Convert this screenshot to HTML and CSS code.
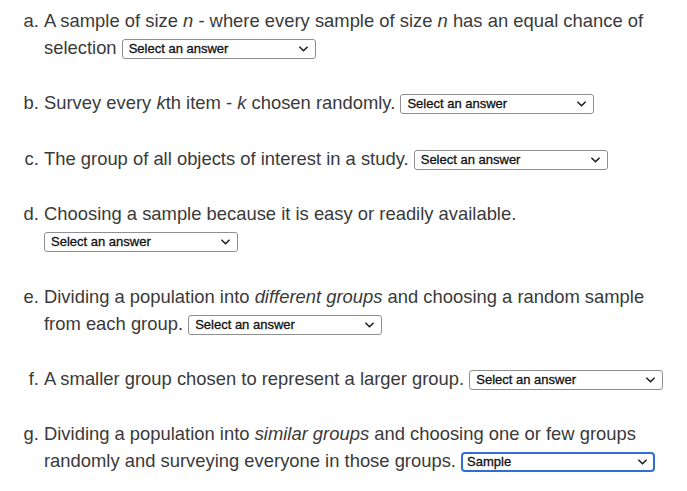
FILE: index.html
```html
<!DOCTYPE html>
<html>
<head>
<meta charset="utf-8">
<link rel="stylesheet" href="styles.css">
</head>
<body>
<ol class="quiz">
  <li>A sample of size <i>n</i> - where every sample of size <i>n</i> has an equal chance of selection <span class="sel"><span class="sel-text">Select an answer</span><svg class="chev" viewBox="0 0 10 6" width="9" height="6"><path d="M1 1 L5 5 L9 1" fill="none" stroke="#222" stroke-width="1.8" stroke-linecap="round" stroke-linejoin="round"/></svg></span></li>
  <li>Survey every <i>k</i>th item - <i>k</i> chosen randomly. <span class="sel"><span class="sel-text">Select an answer</span><svg class="chev" viewBox="0 0 10 6" width="9" height="6"><path d="M1 1 L5 5 L9 1" fill="none" stroke="#222" stroke-width="1.8" stroke-linecap="round" stroke-linejoin="round"/></svg></span></li>
  <li>The group of all objects of interest in a study. <span class="sel"><span class="sel-text">Select an answer</span><svg class="chev" viewBox="0 0 10 6" width="9" height="6"><path d="M1 1 L5 5 L9 1" fill="none" stroke="#222" stroke-width="1.8" stroke-linecap="round" stroke-linejoin="round"/></svg></span></li>
  <li>Choosing a sample because it is easy or readily available. <span class="sel"><span class="sel-text">Select an answer</span><svg class="chev" viewBox="0 0 10 6" width="9" height="6"><path d="M1 1 L5 5 L9 1" fill="none" stroke="#222" stroke-width="1.8" stroke-linecap="round" stroke-linejoin="round"/></svg></span></li>
  <li>Dividing a population into <i>different groups</i> and choosing a random sample from each group. <span class="sel"><span class="sel-text">Select an answer</span><svg class="chev" viewBox="0 0 10 6" width="9" height="6"><path d="M1 1 L5 5 L9 1" fill="none" stroke="#222" stroke-width="1.8" stroke-linecap="round" stroke-linejoin="round"/></svg></span></li>
  <li>A smaller group chosen to represent a larger group. <span class="sel"><span class="sel-text">Select an answer</span><svg class="chev" viewBox="0 0 10 6" width="9" height="6"><path d="M1 1 L5 5 L9 1" fill="none" stroke="#222" stroke-width="1.8" stroke-linecap="round" stroke-linejoin="round"/></svg></span></li>
  <li>Dividing a population into <i>similar groups</i> and choosing one or few groups randomly and surveying everyone in those groups. <span class="sel sel-focus"><span class="sel-text">Sample</span><svg class="chev" viewBox="0 0 10 6" width="9" height="6"><path d="M1 1 L5 5 L9 1" fill="none" stroke="#222" stroke-width="1.8" stroke-linecap="round" stroke-linejoin="round"/></svg></span></li>
</ol>
</body>
</html>
```

FILE: styles.css
```css
html, body {
  margin: 0;
  padding: 0;
  background: #ffffff;
}

body {
  font-family: "Liberation Sans", Arial, Helvetica, sans-serif;
  color: #3a3a3a;
  font-size: 18.4px;
  line-height: 27px;
}

.quiz {
  list-style: lower-alpha;
  margin: 0;
  padding: 7px 18px 0 44px;
}

.quiz li {
  margin-bottom: 28.4px;
}

.sel {
  display: inline-flex;
  align-items: center;
  justify-content: space-between;
  box-sizing: border-box;
  width: 194px;
  height: 20px;
  padding: 0 7px 0 6px;
  border: 1px solid #8f8f8f;
  border-radius: 3px;
  background: #ffffff;
  vertical-align: 1px;
  line-height: 18px;
}

.sel-text {
  font-family: "Liberation Sans", Arial, Helvetica, sans-serif;
  font-size: 13px;
  color: #111111;
  -webkit-text-stroke: 0.3px #111111;
}

.chev {
  display: block;
  flex: none;
}

.sel-focus {
  border: 2px solid #2f6fd1;
  border-radius: 4px;
  padding: 0 6px 0 4px;
}
```
